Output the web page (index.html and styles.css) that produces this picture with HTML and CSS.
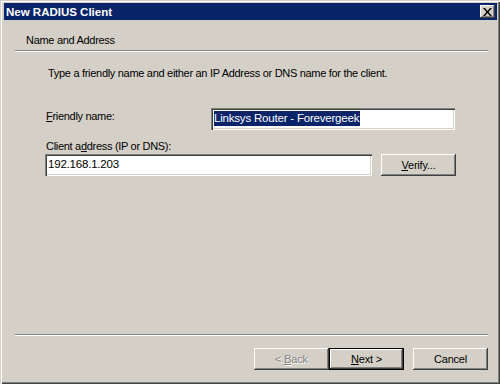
FILE: index.html
```html
<!DOCTYPE html>
<html lang="en">
<head>
    <meta charset="UTF-8">
    <title>New RADIUS Client</title>
    <link rel="stylesheet" href="styles.css">
</head>
<body>
    <div class="window">
        <div class="titlebar">
            <span class="title">New RADIUS Client</span>
            <button class="close-btn" type="button">
                <svg width="9" height="8" viewBox="0 0 9 8">
                    <path d="M0 0h2l2.5 3 2.5-3h2l-3.5 4 3.5 4h-2l-2.5-3-2.5 3h-2l3.5-4z" fill="#000"/>
                </svg>
            </button>
        </div>

        <div class="client">
            <!-- Wizard header -->
            <div class="header">Name and Address</div>
            <div class="separator"></div>

            <div class="page">
                <p class="intro">Type a friendly name and either an IP Address or DNS name for the client.</p>

                <div class="field-row">
                    <label class="label"><u>F</u>riendly name:</label>
                    <div class="textbox name-box"><span class="selected">Linksys Router - Forevergeek</span></div>
                </div>

                <label class="label address-label">Client a<u>d</u>dress (IP or DNS):</label>
                <div class="address-row">
                    <div class="textbox address-box">192.168.1.203</div>
                    <button class="btn" type="button"><u>V</u>erify...</button>
                </div>
            </div>

            <div class="separator bottom-sep"></div>
            <div class="buttons">
                <button class="btn disabled" type="button">&lt; <u>B</u>ack</button>
                <button class="btn default" type="button"><u>N</u>ext &gt;</button>
                <button class="btn cancel" type="button">Cancel</button>
            </div>
        </div>
    </div>
</body>
</html>
```

FILE: styles.css
```css
body {
    margin: 0;
    background-color: #d4d0c8;
    font-family: "Liberation Sans", Arial, sans-serif;
    font-size: 11px;
    letter-spacing: -0.3px;
    color: #000;
}
.window {
    width: 500px;
    height: 384px;
    box-sizing: border-box;
    padding: 3px 3px 3px 4px;
    display: flex;
    flex-direction: column;
    background-color: #d4d0c8;
    box-shadow: inset 1px 1px #d4d0c8, inset 2px 2px #fff, inset -1px -1px #404040, inset -2px -2px #808080;
}
.titlebar {
    height: 17px;
    background-color: #0a246a;
    display: flex;
    align-items: center;
    justify-content: space-between;
    padding: 0 2px 0 2px;
}
.title {
    color: #fff;
    font-weight: bold;
    font-size: 11.5px;
    letter-spacing: 0;
}
.close-btn {
    width: 15px;
    height: 13px;
    padding: 0;
    border: none;
    background-color: #d4d0c8;
    box-shadow: inset -1px -1px #404040, inset 1px 1px #fff, inset -2px -2px #808080;
    display: flex;
    align-items: center;
    justify-content: center;
}
.client {
    flex: 1;
    display: flex;
    flex-direction: column;
}
.header {
    padding: 13px 0 3px 22px;
    line-height: 14px;
}
.separator {
    margin: 0 9px 0 11px;
    border-top: 1px solid #808080;
    border-bottom: 1px solid #fff;
}
.page {
    padding: 14px 0 0 41px;
}
.intro {
    margin: 0 0 28px 3px;
    line-height: 14px;
}
.field-row {
    display: flex;
    align-items: flex-start;
}
.label {
    display: block;
    margin-left: 1px;
    line-height: 14px;
    padding-top: 1px;
    width: 165px;
}
.address-label {
    margin-top: 8px;
    width: auto;
}
.textbox {
    height: 22px;
    box-sizing: border-box;
    background-color: #fff;
    padding: 3px 3px;
    line-height: 15px;
    font-size: 11.5px;
    letter-spacing: -0.2px;
    white-space: nowrap;
    box-shadow: inset 1px 1px #808080, inset 2px 2px #404040, inset -1px -1px #fff, inset -2px -2px #d4d0c8;
}
.name-box {
    width: 244px;
}
.selected {
    background-color: #0a246a;
    color: #fff;
    display: inline-block;
    padding-right: 1px;
}
.address-row {
    display: flex;
    gap: 9px;
    margin-top: 1px;
}
.address-box {
    width: 327px;
}
.btn {
    width: 75px;
    height: 22px;
    padding: 0;
    border: none;
    background-color: #d4d0c8;
    font-family: "Liberation Sans", Arial, sans-serif;
    font-size: 11px;
    letter-spacing: -0.2px;
    color: #000;
    box-shadow: inset -1px -1px #404040, inset 1px 1px #fff, inset -2px -2px #808080, inset 2px 2px #d4d0c8;
}
.bottom-sep {
    margin-top: auto;
}
.buttons {
    display: flex;
    justify-content: flex-end;
    padding: 12px 9px 11px 0;
}
.disabled {
    color: #808080;
    text-shadow: 1px 1px #fff;
}
.default {
    box-shadow: inset 0 0 0 1px #000, inset -2px -2px #404040, inset 2px 2px #fff, inset -3px -3px #808080;
}
.cancel {
    margin-left: 9px;
}
```
